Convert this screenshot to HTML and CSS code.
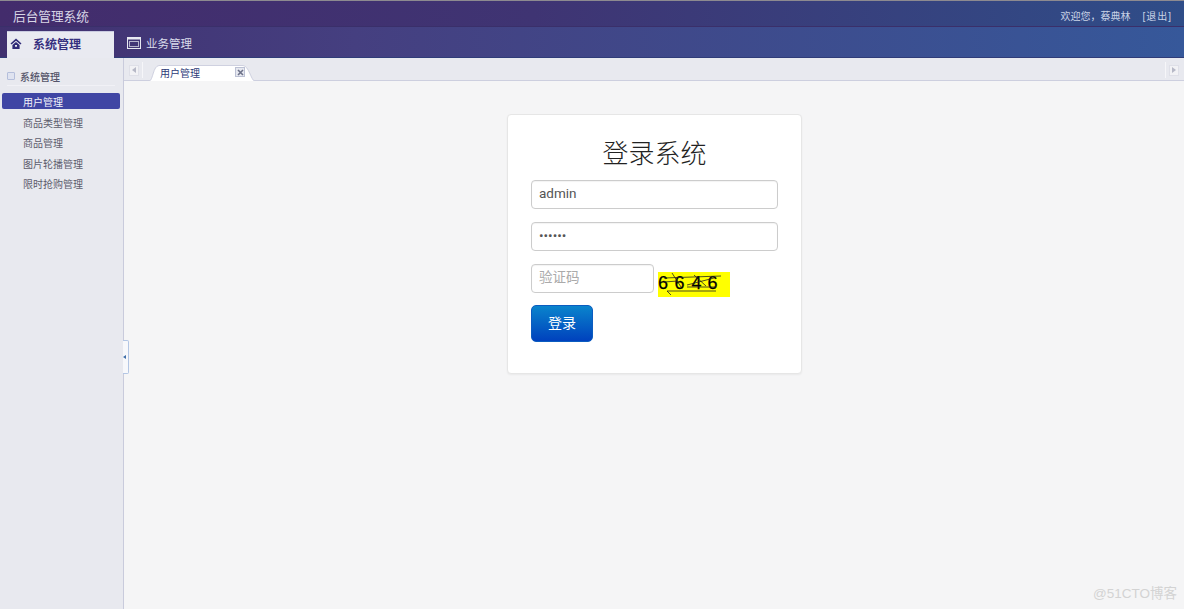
FILE: index.html
```html
<!DOCTYPE html>
<html lang="zh-CN">
<head>
    <meta charset="UTF-8">
    <title>后台管理系统</title>
    <link rel="stylesheet" href="styles.css">
</head>
<body>

<div class="page">
    <div class="top-bar">
        <span class="app-title">后台管理系统</span>
        <span class="user-info">欢迎您，蔡典林<a class="logout">[退出]</a></span>
    </div>

    <div class="nav-bar">
        <div class="nav-item active">
            <svg class="nav-icon" width="12" height="12" viewBox="0 0 12 12">
                <path d="M6 0.5 L0.5 5.4 L1.6 6.5 L6 2.7 L10.4 6.5 L11.5 5.4 Z" fill="#2f2a78"/>
                <path d="M2.4 7 L6 3.9 L9.6 7 V11 H2.4 Z M5 7 V8.8 H7 V7 Z" fill="#2f2a78" fill-rule="evenodd"/>
            </svg>
            <span>系统管理</span>
        </div>
        <div class="nav-item">
            <svg class="nav-icon" width="14" height="12" viewBox="0 0 14 12">
                <rect x="0.5" y="0.5" width="13" height="11" fill="none" stroke="#e8e9f2"/>
                <rect x="0.5" y="0.5" width="13" height="2" fill="#e8e9f2"/>
                <rect x="2.5" y="4.5" width="9" height="5" fill="none" stroke="#e8e9f2" stroke-opacity="0.7"/>
            </svg>
            <span>业务管理</span>
        </div>
    </div>

    <div class="main">
        <div class="sidebar">
            <div class="side-title">
                <span class="side-toggle"></span>
                <span>系统管理</span>
            </div>
            <ul class="side-menu">
                <li class="selected">用户管理</li>
                <li>商品类型管理</li>
                <li>商品管理</li>
                <li>图片轮播管理</li>
                <li>限时抢购管理</li>
            </ul>
        </div>

        <div class="content">
            <div class="tab-strip">
                <div class="scroll-cell">
                    <span class="scroll-btn"><i class="arrow-left"></i></span>
                </div>
                <div class="tab">
                    <svg class="tab-shape" width="106" height="16" viewBox="0 0 106 16">
                        <path d="M0.5 16 C4 15 4 1 10 0.5 H94 C100 1 102 15 105.5 16" fill="#fff" stroke="#cfd1e0"/>
                    </svg>
                    <span class="tab-label">用户管理</span>
                    <span class="tab-close">
                        <svg width="7" height="7" viewBox="0 0 7 7"><path d="M1 1 L6 6 M6 1 L1 6" stroke="#6d7289" stroke-width="1.6"/></svg>
                    </span>
                </div>
                <div class="scroll-cell right">
                    <span class="scroll-btn"><i class="arrow-right"></i></span>
                </div>
            </div>

            <div class="panel">
                <form class="login-card">
                    <h2>登录系统</h2>
                    <input type="text" class="field" value="admin">
                    <input type="password" class="field" value="123456">
                    <div class="code-row">
                        <input type="text" class="field code-input" placeholder="验证码">
                        <svg class="captcha" width="72" height="25" viewBox="0 0 72 25">
                            <rect width="72" height="25" fill="#ffff00"/>
                            <text x="0" y="17" class="captcha-text">6</text>
                            <text x="16.5" y="17" class="captcha-text">6</text>
                            <text x="33.5" y="17" class="captcha-text">4</text>
                            <text x="49.5" y="17" class="captcha-text">6</text>
                            <path d="M14 1 L23 15 M6 6 L63 4 M9 19 L58 19 M9 19 L13 23 M29 13 L56 6 M29 15 L58 15 M6 10 L20 9 M36 3 L48 14" stroke="#222" stroke-width="0.8" fill="none"/>
                        </svg>
                    </div>
                    <button type="button" class="btn-login">登录</button>
                </form>
            </div>
        </div>

        <div class="collapse-handle"><i></i></div>
    </div>

    <div class="watermark">@51CTO博客</div>
</div>

</body>
</html>
```

FILE: styles.css
```css
* {
    box-sizing: border-box;
}

html, body {
    margin: 0;
    height: 100%;
    overflow: hidden;
}

body {
    font-family: "Liberation Sans", "Noto Sans CJK SC", sans-serif;
    font-size: 12px;
    color: #4a4a55;
}

.page {
    position: relative;
    display: flex;
    flex-direction: column;
    height: 609px;
}

.top-bar {
    display: flex;
    justify-content: space-between;
    align-items: center;
    height: 27px;
    padding: 4px 12px 0 13px;
    background: linear-gradient(90deg, #432c6c 0%, #3f3473 45%, #2f4d88 100%);
    border-top: 1px solid #8d8a90;
    border-bottom: 1px solid #3a2f6a;
}

.app-title {
    font-size: 12.67px;
    color: #d8d6e6;
}

.user-info {
    font-size: 10px;
    color: #c9d3e6;
}

.logout {
    margin-left: 12px;
    letter-spacing: 1px;
}

.nav-bar {
    display: flex;
    align-items: flex-end;
    height: 31px;
    padding-left: 7px;
    background: linear-gradient(90deg, #40306f 0%, #453f80 30%, #36589a 100%);
    border-bottom: 1px solid #2f3c78;
}

.nav-item {
    display: flex;
    align-items: center;
    height: 27px;
    margin-left: 13px;
    padding-bottom: 2px;
    font-size: 11.5px;
    color: #d9dbea;
}

.nav-item .nav-icon {
    margin-right: 5px;
}

.nav-item.active {
    width: 107px;
    height: 27px;
    margin-left: 0;
    margin-bottom: -1px;
    padding-left: 3px;
    padding-bottom: 3px;
    font-size: 12px;
    font-weight: 700;
    color: #35307f;
    background: #e9eaf1;
    border-top: 1px solid #c9cbe0;
}

.nav-item.active .nav-icon {
    margin-right: 11px;
}

.main {
    display: flex;
    flex: 1;
    position: relative;
    min-height: 0;
}

.sidebar {
    width: 124px;
    padding-top: 10px;
    background: #e8e9ef;
    border-right: 1px solid #c9cbdc;
}

.side-title {
    display: flex;
    align-items: center;
    height: 18px;
    margin: 0 8px 7px 7px;
    padding-bottom: 1px;
    font-size: 10px;
    font-weight: 500;
    color: #55556a;
    border-bottom: 1px solid #f1f1f6;
}

.side-toggle {
    width: 8px;
    height: 8px;
    margin-right: 5px;
    background: #dfe3f0;
    border: 1px solid #b4bedb;
    border-radius: 1px;
}

.side-menu {
    list-style: none;
    margin: 0;
    padding: 0 3px 0 2px;
}

.side-menu li {
    height: 16px;
    margin-bottom: 4.6px;
    padding-left: 21px;
    font-size: 10px;
    line-height: 20px;
    color: #5c5c6c;
}

.side-menu li.selected {
    color: #f2f2fa;
    background: #4046a4;
    border-radius: 2px;
}

.content {
    display: flex;
    flex-direction: column;
    flex: 1;
    min-width: 0;
}

.tab-strip {
    display: flex;
    align-items: flex-end;
    height: 23px;
    background: #e8e9ef;
    border-bottom: 1px solid #cdcfdf;
}

.scroll-cell {
    display: flex;
    align-items: center;
    height: 16px;
    margin-bottom: 2px;
    padding: 0 3px 0 5px;
    border-right: 1px solid #f6f6f9;
}

.scroll-cell.right {
    margin-left: auto;
    padding: 0 5px 0 3px;
    border-right: 0;
    border-left: 1px solid #f6f6f9;
}

.scroll-btn {
    display: flex;
    align-items: center;
    justify-content: center;
    width: 10px;
    height: 11px;
    background: #f2f2f5;
    border: 1px solid #dfe0e8;
}

.arrow-left {
    border-style: solid;
    border-width: 3px 4px 3px 0;
    border-color: transparent #b6b8c6 transparent transparent;
}

.arrow-right {
    border-style: solid;
    border-width: 3px 0 3px 4px;
    border-color: transparent transparent transparent #b6b8c6;
}

.tab {
    position: relative;
    display: flex;
    justify-content: space-between;
    align-items: center;
    width: 106px;
    height: 16px;
    margin-bottom: -1px;
    margin-left: 6px;
    padding: 0 10px 2px 11px;
}

.tab-shape {
    position: absolute;
    left: 0;
    top: 0;
}

.tab-label {
    position: relative;
    font-size: 10px;
    color: #2c3a78;
}

.tab-close {
    position: relative;
    display: flex;
    align-items: center;
    justify-content: center;
    width: 10px;
    height: 10px;
    background: #e6e8f0;
    border: 1px solid #bcc1d4;
}

.panel {
    display: flex;
    justify-content: center;
    align-items: flex-start;
    flex: 1;
    padding: 33px 0 0 1px;
    background: #f5f5f6;
}

.login-card {
    display: flex;
    flex-direction: column;
    align-items: flex-start;
    width: 295px;
    height: 260px;
    padding: 20px 23px 0 23px;
    background: #fff;
    border: 1px solid #e6e6e6;
    border-radius: 4px;
    box-shadow: 0 1px 2px rgba(0, 0, 0, 0.05);
}

.login-card h2 {
    width: 100%;
    height: 39px;
    margin: 0 0 6px 0;
    font-family: "Liberation Serif", "Noto Sans CJK SC", serif;
    font-size: 26px;
    font-weight: 300;
    line-height: 39px;
    text-align: center;
    color: #222;
}

.field {
    display: block;
    width: 100%;
    height: 29px;
    margin-bottom: 13px;
    padding: 0 7px 3px 7px;
    font-family: Roboto, "Noto Sans CJK SC", sans-serif;
    font-size: 13.5px;
    color: #555;
    background: #fff;
    border: 1px solid #ccc;
    border-radius: 4px;
    box-shadow: inset 0 1px 1px rgba(0, 0, 0, 0.05);
    outline: none;
}

.field::placeholder {
    color: #aaa;
}

.code-row {
    display: flex;
    align-items: flex-start;
    margin-bottom: 8px;
}

.code-input {
    width: 123px;
    margin-bottom: 0;
}

.captcha {
    margin: 8px 0 0 4px;
}

.captcha-text {
    font-family: "Liberation Sans", sans-serif;
    font-size: 18px;
    fill: #000;
    stroke: #000;
    stroke-width: 0.25;
}

.btn-login {
    width: 62px;
    height: 37px;
    padding: 0 0 4px 0;
    font-family: "Noto Sans CJK SC", sans-serif;
    font-size: 14px;
    color: #fff;
    background: linear-gradient(180deg, #0a84cc 0%, #0041bd 100%);
    border: 1px solid #0b5cc0;
    border-radius: 5px;
}

.collapse-handle {
    position: absolute;
    left: 123px;
    top: 282px;
    display: flex;
    align-items: center;
    width: 6px;
    height: 34px;
    background: #f7f8fb;
    border: 1px solid #b3c6e4;
    border-left: 0;
    border-radius: 0 2px 2px 0;
}

.collapse-handle i {
    border-style: solid;
    border-width: 2.5px 3px 2.5px 0;
    border-color: transparent #3f6ea8 transparent transparent;
}

.watermark {
    position: absolute;
    right: 7px;
    bottom: 7px;
    font-size: 13.5px;
    color: #d3d3d3;
}
```
